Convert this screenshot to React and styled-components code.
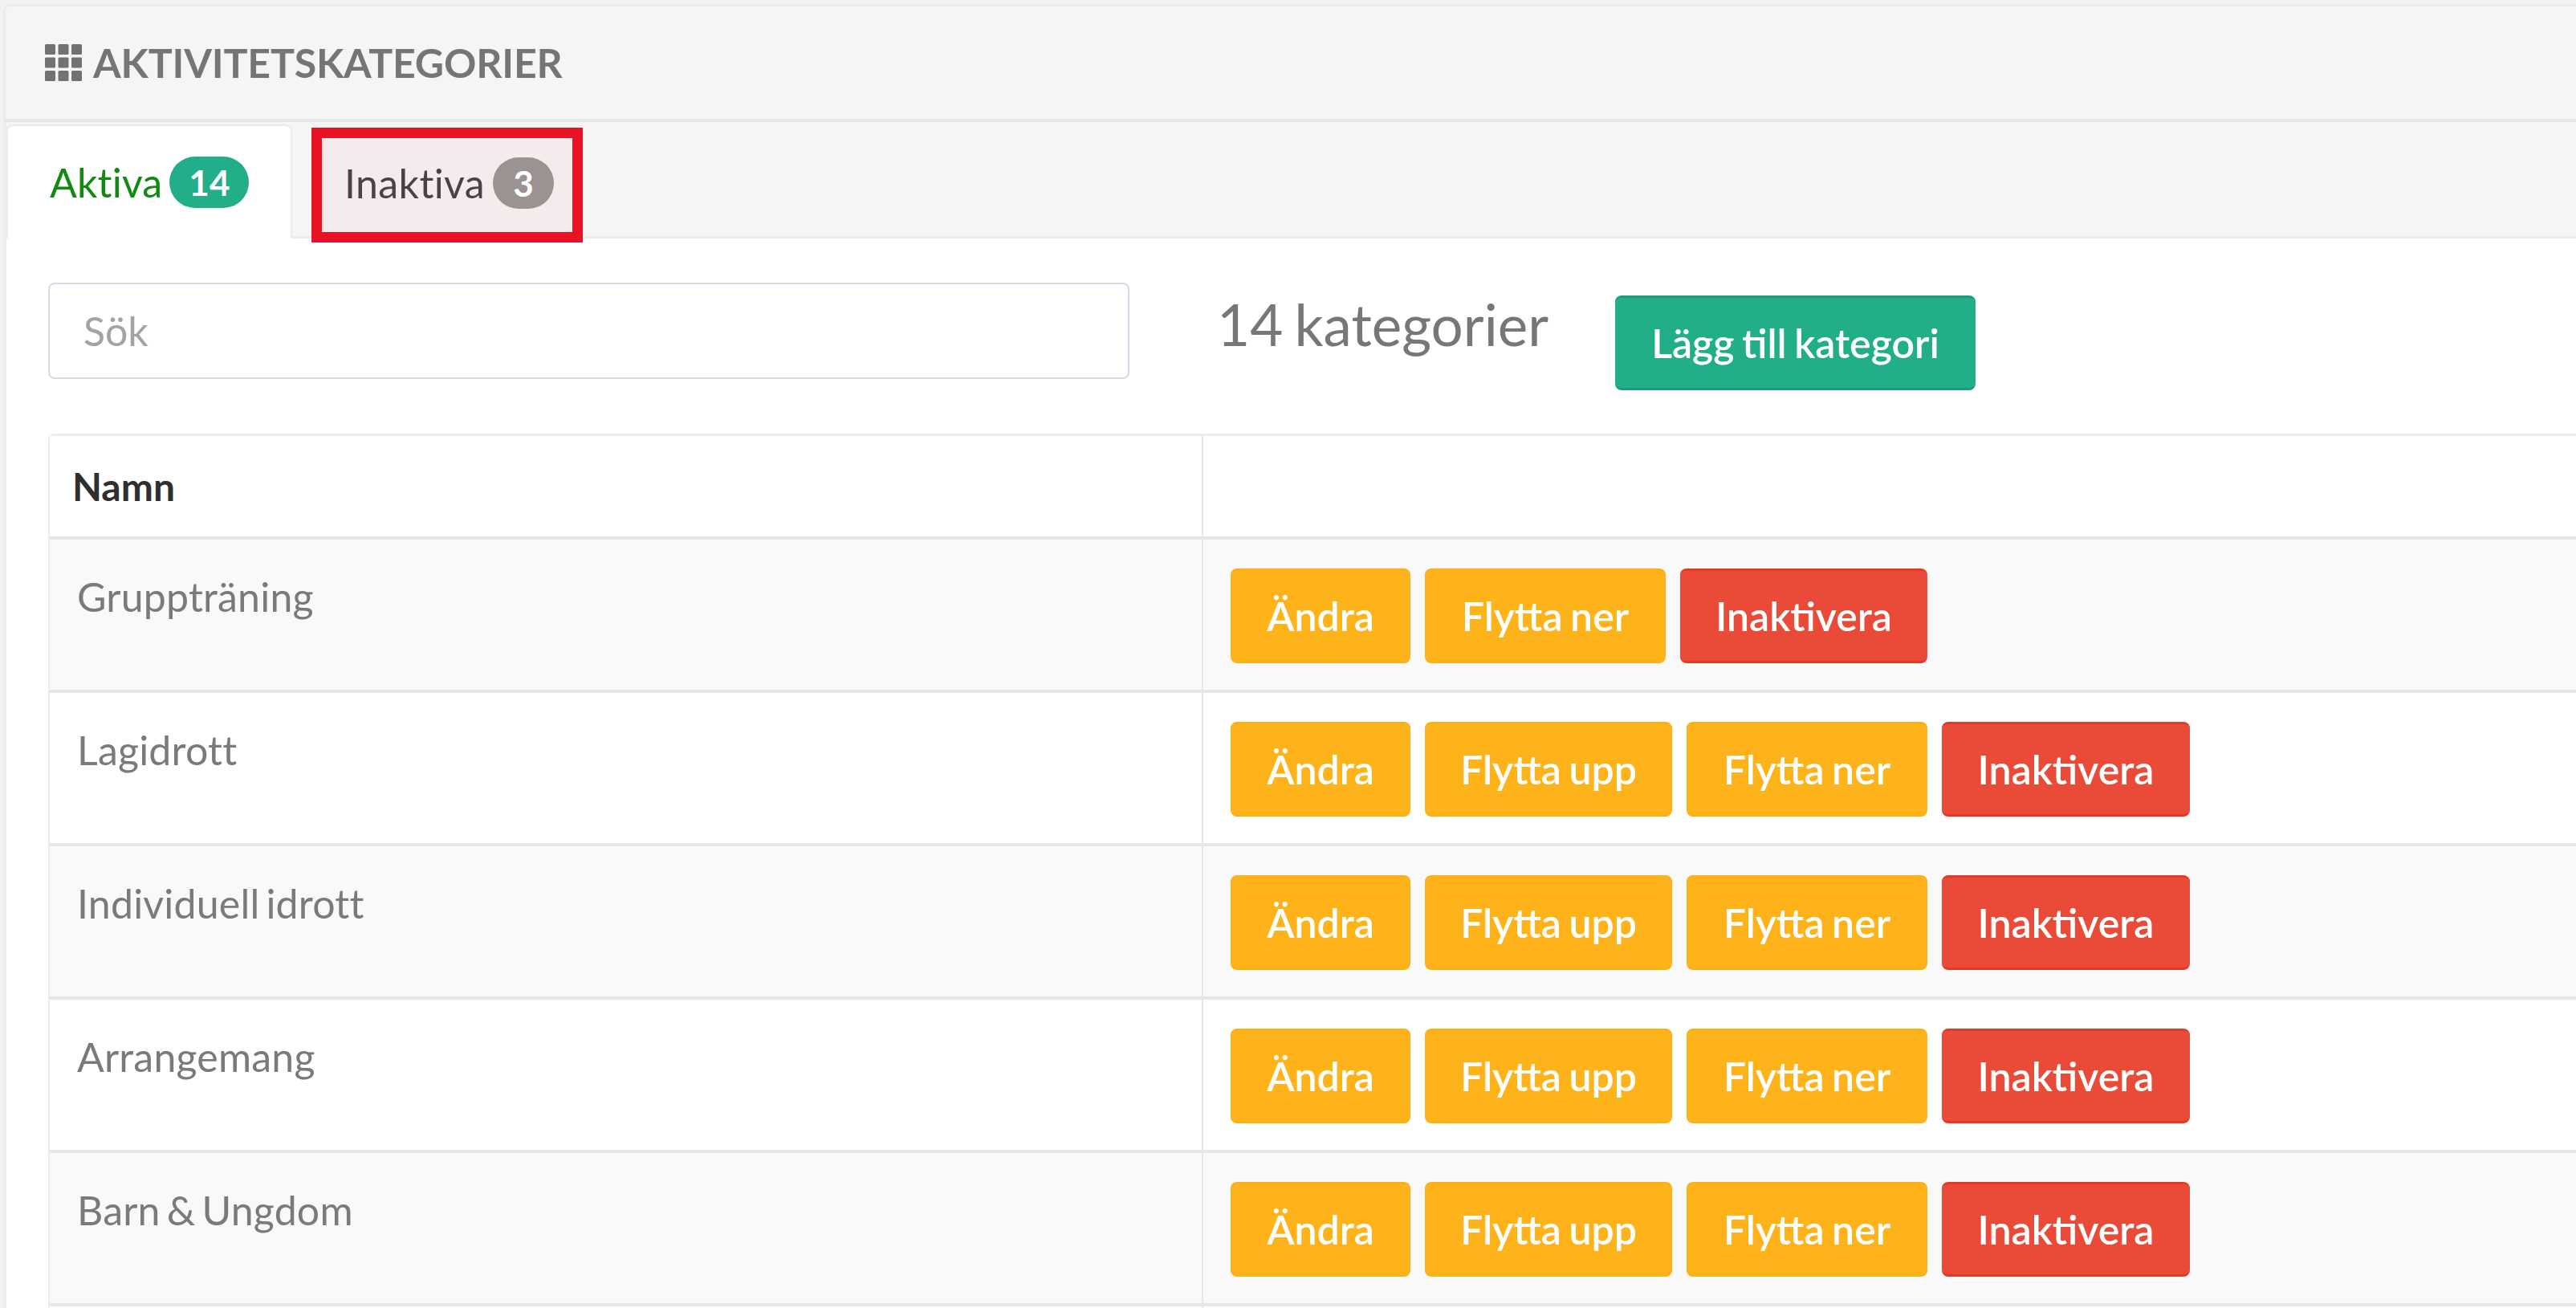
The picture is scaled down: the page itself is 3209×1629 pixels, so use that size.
import React from "react";
import styled, { createGlobalStyle } from "styled-components";

const Global = createGlobalStyle`
  html, body { margin: 0; padding: 0; background: #fff; }
  body { font-family: Lato, "Open Sans", "Liberation Sans", sans-serif; }
  #root { width: 3209px; height: 1629px; overflow: hidden; }
  * { box-sizing: border-box; }
`;

const Page = styled.div`
  width: 3209px;
  height: 1629px;
  padding-top: 5px;
  background: #f2f2f2;
  overflow: hidden;
`;
const Header = styled.header`
  height: 147px;
  margin-left: 4px;
  padding: 0 0 0 49px;
  display: flex;
  align-items: center;
  gap: 14px;
  background: #f5f5f5;
  border-top: 3px solid #ececec;
  border-left: 3px solid #ececec;
  border-bottom: 4px solid #e6e6e6;
  border-top-left-radius: 8px;
`;
const Title = styled.h1`
  margin: 0;
  font-size: 50px;
  line-height: 1;
  font-weight: 700;
  color: #757575;
  letter-spacing: -0.15px;
`;
const GridIcon = styled.svg`
  width: 46px;
  height: 46px;
  fill: #727272;
  flex: none;
`;
const Panel = styled.div`
  height: 1477px;
  margin-left: 4px;
  background: #fff;
  border-left: 4px solid #ececec;
`;
const TabBar = styled.nav`
  height: 145px;
  display: flex;
  align-items: flex-start;
  gap: 24px;
  background: #f5f5f5;
  border-bottom: 3px solid #ececec;
`;
const ActiveTab = styled.div`
  width: 356px;
  height: 142px;
  margin-top: 3px;
  padding: 0 0 0 52px;
  display: flex;
  align-items: center;
  gap: 9px;
  background: #fff;
  border: 2px solid #ececec;
  border-bottom: 0;
  border-radius: 8px 8px 0 0;
  font-size: 50px;
  letter-spacing: 0.2px;
  color: #118a11;
  position: relative;
`;
const HoverTab = styled.div`
  width: 338px;
  height: 143px;
  margin-top: 7px;
  padding: 0 0 6px 28px;
  display: flex;
  align-items: center;
  gap: 10px;
  background: #f5ebec;
  border: 13px solid #e81224;
  font-size: 50px;
  letter-spacing: 0.4px;
  color: #4a4344;
  position: relative;
`;
const Badge = styled.span`
  height: 64px;
  min-width: ${(p) => (p.$wide ? 99 : 76)}px;
  border-radius: 32px;
  display: inline-flex;
  align-items: center;
  justify-content: center;
  background: ${(p) => p.$bg};
  color: #fff;
  font-size: 44px;
  font-weight: 700;
  letter-spacing: 0;
`;
const Content = styled.div`
  padding: 55px 0 0 52px;
`;
const Toolbar = styled.div`
  display: flex;
  align-items: flex-start;
  height: 188px;
`;
const SearchBox = styled.input`
  width: 1347px;
  height: 120px;
  padding: 0 42px;
  border: 2px solid #d3dce6;
  border-radius: 8px;
  font-family: inherit;
  font-size: 50px;
  background: #fff;
  outline: none;
  &::placeholder { color: #a3a3a3; opacity: 1; }
`;
const Count = styled.div`
  margin-left: 109px;
  margin-top: 9px;
  font-size: 71px;
  line-height: 86px;
  word-spacing: -4px;
  color: #777;
  width: 496px;
  flex: none;
`;
const Btn = styled.button`
  height: 118px;
  padding: 0;
  width: ${(p) => p.$w}px;
  border: 0;
  border-top: 3px solid ${(p) => p.$edge};
  border-bottom: 3px solid ${(p) => p.$edge};
  border-radius: 8px;
  background: ${(p) => p.$bg};
  color: #fff;
  font-family: inherit;
  font-size: 50px;
  font-weight: 600;
  word-spacing: -3px;
  white-space: nowrap;
  flex: none;
`;
const AddBtn = styled(Btn)`
  margin-top: 16px;
`;
const Table = styled.div`
  border-top: 3px solid #ececec;
  border-left: 2px solid #ececec;
  border-top-left-radius: 8px;
`;
const Row = styled.div`
  display: grid;
  grid-template-columns: 1435px 1fr;
  height: ${(p) => p.$h}px;
  background: ${(p) => (p.$odd ? "#f9f9f9" : "#fff")};
  border-bottom: 4px solid #e6e6e6;
`;
const HeadCell = styled.div`
  padding: 0 0 0 28px;
  display: flex;
  align-items: center;
  font-size: 48px;
  font-weight: 700;
  color: #2f2f2f;
`;
const NameCell = styled.div`
  padding: 41px 0 0 34px;
  font-size: 50px;
  line-height: 60px;
  letter-spacing: 0.2px;
  word-spacing: -5px;
  color: #7a7a7a;
`;
const ActionCell = styled.div`
  padding: 36px 0 0 34px;
  display: flex;
  gap: 18px;
  border-left: 2px solid #e4e6e8;
`;
const EmptyCell = styled.div`
  border-left: 2px solid #e4e6e8;
`;

const amber = { $bg: "#ffb31a", $edge: "#fbb016" };
const red = { $bg: "#e94b38", $edge: "#e33a25" };

const rows = ["Gruppträning", "Lagidrott", "Individuell idrott", "Arrangemang", "Barn & Ungdom", ""];

export default function App() {
  return (
    <Page>
      <Global />
      <Header>
        <GridIcon viewBox="0 0 46 46" aria-hidden="true">
          {[0, 16.5, 33].flatMap((y) =>
            [0, 16.5, 33].map((x) => <rect key={`${x}-${y}`} x={x} y={y} width="13" height="13" rx="1.5" />)
          )}
        </GridIcon>
        <Title>AKTIVITETSKATEGORIER</Title>
      </Header>
      <Panel>
        <TabBar>
          <ActiveTab>
            Aktiva <Badge $wide $bg="#22ae88">14</Badge>
          </ActiveTab>
          <HoverTab>
            Inaktiva <Badge $bg="#9b9292">3</Badge>
          </HoverTab>
        </TabBar>
        <Content>
          <Toolbar>
            <SearchBox placeholder="Sök" />
            <Count>14 kategorier</Count>
            <AddBtn $w={449} $bg="#22ae88" $edge="#1a9c78">Lägg till kategori</AddBtn>
          </Toolbar>
          <Table>
            <Row $h={129}>
              <HeadCell>Namn</HeadCell>
              <EmptyCell />
            </Row>
            {rows.map((name, i) => (
              <Row key={i} $h={191} $odd={i % 2 === 0}>
                <NameCell>{name}</NameCell>
                {name ? (
                  <ActionCell>
                    <Btn $w={224} {...amber}>Ändra</Btn>
                    {i > 0 && <Btn $w={308} {...amber}>Flytta upp</Btn>}
                    <Btn $w={300} {...amber}>Flytta ner</Btn>
                    <Btn $w={i > 0 ? 309 : 308} {...red}>Inaktivera</Btn>
                  </ActionCell>
                ) : (
                  <EmptyCell />
                )}
              </Row>
            ))}
          </Table>
        </Content>
      </Panel>
    </Page>
  );
}
